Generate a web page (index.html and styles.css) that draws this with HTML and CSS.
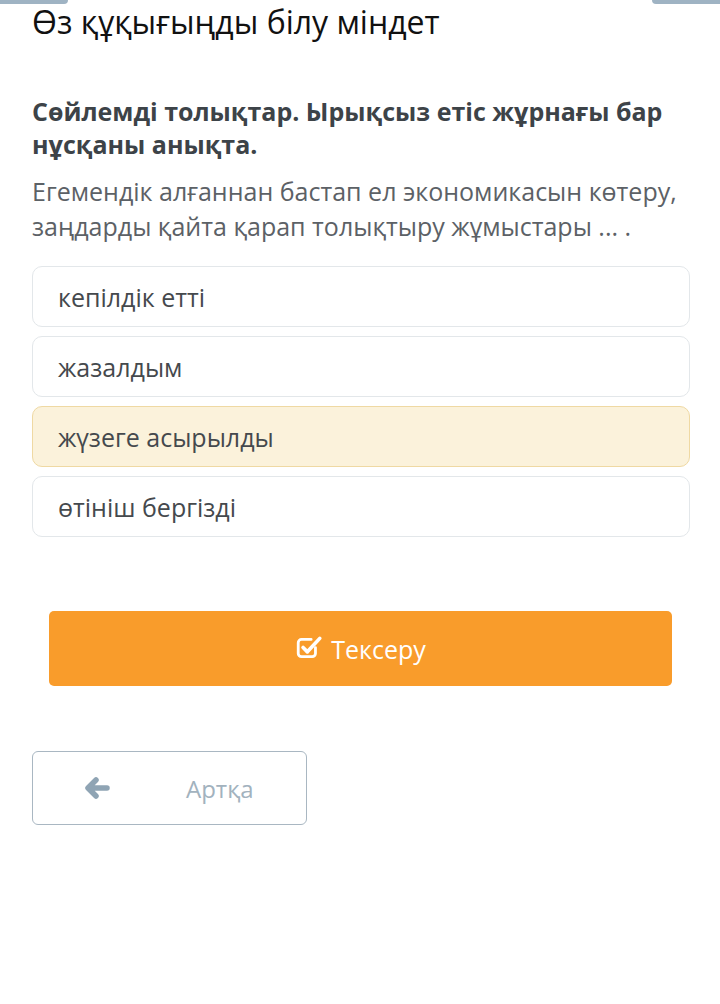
FILE: index.html
```html
<!DOCTYPE html>
<html lang="kk">
<head>
    <meta charset="UTF-8">
    <meta name="viewport" content="width=device-width, initial-scale=1.0">
    <title>Өз құқығыңды білу міндет</title>
    <link rel="stylesheet" href="styles.css">
</head>
<body>

    <!-- жоғарғы кесілген батырмалар -->
    <div class="top-tabs">
        <span class="tab tab-left"></span>
        <span class="tab tab-right"></span>
    </div>

    <main class="page">
        <h1 class="title">Өз құқығыңды білу міндет</h1>

        <div class="question">
            <p class="question-head">Сөйлемді толықтар. Ырықсыз етіс жұрнағы бар нұсқаны анықта.</p>
            <p class="question-text">Егемендік алғаннан бастап ел экономикасын көтеру, заңдарды қайта қарап толықтыру жұмыстары ... .</p>
        </div>

        <ul class="answers">
            <li class="answer">кепілдік етті</li>
            <li class="answer">жазалдым</li>
            <li class="answer selected">жүзеге асырылды</li>
            <li class="answer">өтініш бергізді</li>
        </ul>

        <button class="check-btn">
            <svg class="check-icon" viewBox="0 0 26 26" width="28" height="28">
                <path d="M19 13.5v5.5a3 3 0 0 1-3 3H6a3 3 0 0 1-3-3V9a3 3 0 0 1 3-3h9" fill="none" stroke="#fff" stroke-width="2.6" stroke-linecap="round"/>
                <path d="M7.5 13.5l4 4L23 5" fill="none" stroke="#fff" stroke-width="3.4" stroke-linecap="round" stroke-linejoin="round"/>
            </svg>
            <span>Тексеру</span>
        </button>

        <button class="back-btn">
            <svg class="arrow-icon" viewBox="0 0 26 24" width="26" height="24">
                <path d="M11 4L3 12l8 8M4 12h18" fill="none" stroke="#8fa4b4" stroke-width="5.5" stroke-linecap="round" stroke-linejoin="round"/>
            </svg>
            <span>Артқа</span>
        </button>
    </main>

</body>
</html>
```

FILE: styles.css
```css
/* жалпы */
body {
    font-family: "Open Sans", "Noto Sans", sans-serif;
    margin: 0;
    padding: 0;
    background-color: #fff;
    color: #45494d;
}

/* жоғарғы кесілген батырмалар */
.top-tabs {
    display: flex;
    justify-content: space-between;
    height: 4px;
}

.tab {
    display: block;
    width: 68px;
    height: 4px;
    background-color: #9fb3c3;
}

.tab-left {
    border-radius: 0 0 6px 0;
}

.tab-right {
    border-radius: 0 0 0 6px;
}

.page {
    padding: 0 30px 0 32px;
}

.title {
    margin: 0;
    font-size: 32px;
    font-weight: 400;
    line-height: 36px;
    color: #111;
}

/* сұрақ */
.question {
    margin-top: 55px;
}

.question-head {
    margin: 0;
    font-size: 25px;
    font-weight: 700;
    line-height: 33px;
    color: #3d4348;
}

.question-text {
    margin: 13px 0 0;
    font-size: 25px;
    line-height: 35px;
    color: #5c6166;
}

/* жауаптар */
.answers {
    list-style: none;
    margin: 22px 0 0;
    padding: 0;
    display: flex;
    flex-direction: column;
    gap: 9px;
}

.answer {
    box-sizing: border-box;
    height: 61px;
    display: flex;
    align-items: center;
    padding-left: 25px;
    border: 1px solid #e3e7ea;
    border-radius: 10px;
    font-size: 25px;
    color: #45494d;
}

.answer.selected {
    background-color: #fbf2db;
    border-color: #efd9a3;
}

/* тексеру батырмасы */
.check-btn {
    display: flex;
    justify-content: center;
    align-items: center;
    gap: 8px;
    width: 623px;
    height: 75px;
    margin: 74px 0 0 17px;
    border: none;
    border-radius: 5px;
    background-color: #f99c2b;
    color: #fff;
    font-family: inherit;
    font-size: 25px;
}

.check-icon {
    margin-top: -3px;
}

/* артқа батырмасы */
.back-btn {
    display: flex;
    align-items: center;
    width: 275px;
    height: 74px;
    margin-top: 65px;
    padding: 0 0 0 52px;
    border: 1px solid #a9b7c2;
    border-radius: 6px;
    background-color: #fff;
    color: #a2b2be;
    font-family: inherit;
    font-size: 24px;
}

.back-btn span {
    margin-left: 75px;
}
```
